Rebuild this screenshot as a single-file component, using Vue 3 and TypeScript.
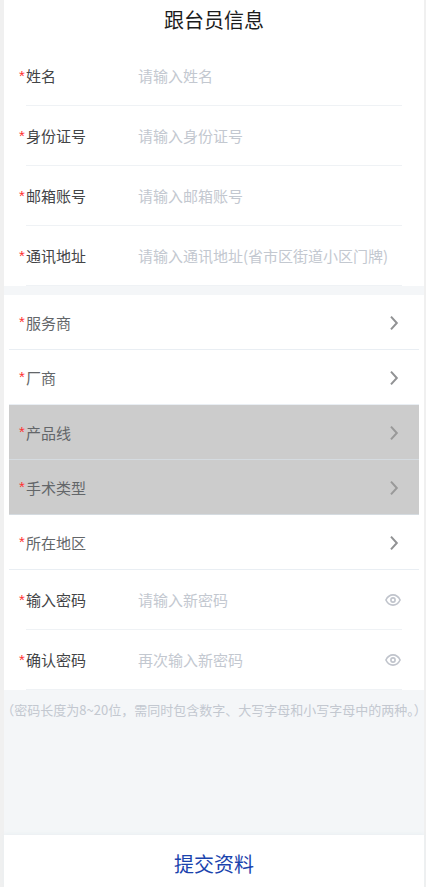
<script setup lang="ts">
import { reactive, ref } from 'vue'

interface TextField {
  key: string
  label: string
  placeholder: string
  type: string
}

interface PickerField {
  label: string
  disabled: boolean
}

const profileFields: TextField[] = [
  { key: 'name', label: '姓名', placeholder: '请输入姓名', type: 'text' },
  { key: 'idcard', label: '身份证号', placeholder: '请输入身份证号', type: 'text' },
  { key: 'email', label: '邮箱账号', placeholder: '请输入邮箱账号', type: 'email' },
  { key: 'address', label: '通讯地址', placeholder: '请输入通讯地址(省市区街道小区门牌)', type: 'text' },
]

const pickerFields: PickerField[] = [
  { label: '服务商', disabled: false },
  { label: '厂商', disabled: false },
  { label: '产品线', disabled: true },
  { label: '手术类型', disabled: true },
  { label: '所在地区', disabled: false },
]

const passwordFields: TextField[] = [
  { key: 'password', label: '输入密码', placeholder: '请输入新密码', type: 'password' },
  { key: 'confirm', label: '确认密码', placeholder: '再次输入新密码', type: 'password' },
]

const form = reactive<Record<string, string>>({
  name: '',
  idcard: '',
  email: '',
  address: '',
  password: '',
  confirm: '',
})

const visible = ref<Record<string, boolean>>({ password: false, confirm: false })

function toggle(key: string) {
  visible.value[key] = !visible.value[key]
}
</script>

<template>
  <form class="page" @submit.prevent>
    <header class="header">
      <h1 class="title">跟台员信息</h1>
    </header>

    <section class="fields">
      <div v-for="field in profileFields" :key="field.key" class="field">
        <span class="star">*</span>
        <div class="field-body">
          <label class="label" :for="field.key">{{ field.label }}</label>
          <input
            :id="field.key"
            v-model="form[field.key]"
            class="input"
            :type="field.type"
            :placeholder="field.placeholder"
          />
        </div>
      </div>
    </section>

    <section class="pickers">
      <button
        v-for="picker in pickerFields"
        :key="picker.label"
        type="button"
        class="picker"
        :disabled="picker.disabled"
      >
        <span class="star">*</span>
        <span class="picker-label">{{ picker.label }}</span>
        <svg class="chevron" viewBox="0 0 10 18" aria-hidden="true">
          <path d="M2 3.6 L7.8 10 L2 16.4" />
        </svg>
      </button>
    </section>

    <section class="fields">
      <div v-for="field in passwordFields" :key="field.key" class="field">
        <span class="star">*</span>
        <div class="field-body">
          <label class="label" :for="field.key">{{ field.label }}</label>
          <input
            :id="field.key"
            v-model="form[field.key]"
            class="input"
            :type="visible[field.key] ? 'text' : 'password'"
            :placeholder="field.placeholder"
          />
          <button type="button" class="eye" :aria-pressed="visible[field.key]" @click="toggle(field.key)">
            <svg viewBox="0 0 17 12" aria-hidden="true">
              <path d="M0.9 6 C2.6 2.6 5.1 0.9 8 0.9 S13.4 2.6 15.1 6 C13.4 9.4 10.9 11.1 8 11.1 S2.6 9.4 0.9 6 Z" />
              <circle cx="8" cy="6" r="2.1" />
            </svg>
          </button>
        </div>
      </div>
    </section>

    <p class="hint"><span class="half">（</span>密码长度为8~20位，需同时包含数字、大写字母和小写字母中的两种<span class="half">。）</span></p>

    <footer class="footer">
      <button type="submit" class="submit">提交资料</button>
    </footer>
  </form>
</template>

<style>
body {
  margin: 0;
  background: #f0f0f0;
}
</style>

<style scoped>
.page {
  box-sizing: border-box;
  display: flex;
  flex-direction: column;
  min-height: 100vh;
  margin: 0 2px 0 4px;
  background: #f4f6f8;
  font-family: "Noto Sans CJK SC", sans-serif;
  font-size: 15px;
}

button,
input {
  margin: 0;
  padding: 0;
  border: 0;
  background: none;
  font: inherit;
}

.header {
  height: 46px;
  background: #fff;
}

.title {
  margin: 0;
  font-size: 20px;
  font-weight: 400;
  line-height: 40px;
  text-align: center;
  color: #1c1c1c;
}

.fields {
  background: #fff;
}

.field {
  display: flex;
  align-items: center;
  height: 60px;
  padding: 0 22px 0 15px;
}

.star {
  flex: none;
  width: 7px;
  font-family: "Liberation Sans", sans-serif;
  font-size: 15px;
  line-height: 20px;
  text-align: left;
  color: #ff3030;
}

.field-body {
  box-sizing: border-box;
  flex: 1;
  display: flex;
  align-items: center;
  min-width: 0;
  height: 60px;
  border-bottom: 1px solid #eff2f5;
}

.label {
  flex: none;
  width: 112px;
  line-height: 22px;
  color: #434446;
}

.input {
  flex: 1;
  min-width: 0;
  height: 40px;
  outline: none;
  color: #434446;
}

.input::placeholder {
  color: #c3c8d0;
  opacity: 1;
}

.eye {
  flex: none;
  display: flex;
  width: 17px;
  height: 12px;
}

.eye svg {
  width: 17px;
  height: 12px;
  fill: none;
  stroke: #c0c4cc;
  stroke-width: 1.6;
}

.pickers {
  margin-top: 9px;
  padding: 0 5px;
  background: #fff;
}

.picker {
  box-sizing: border-box;
  display: flex;
  align-items: center;
  width: 100%;
  height: 55px;
  padding: 0 20px 0 10px;
  border-bottom: 1px solid #e9eef3;
  text-align: left;
  color: #636669;
}

.picker:disabled {
  background: #ccc;
  border-bottom-color: #d5dbe0;
}

.picker-label {
  flex: 1;
}

.chevron {
  width: 10px;
  height: 18px;
  fill: none;
  stroke: #919294;
  stroke-width: 2;
}

.picker:disabled .chevron {
  stroke: #999;
}

.hint {
  margin: 10px 0 0;
  font-size: 13px;
  line-height: 20px;
  text-align: center;
  white-space: nowrap;
  color: #c3c8d0;
}

.half {
  font-feature-settings: "halt";
}

.footer {
  margin-top: auto;
  padding-top: 5px;
  background: #fff;
  box-shadow: 0 -1px 4px #e9eff2;
}

.submit {
  display: block;
  width: 100%;
  height: 47px;
  font-size: 20px;
  color: #1a43ad;
}
</style>
